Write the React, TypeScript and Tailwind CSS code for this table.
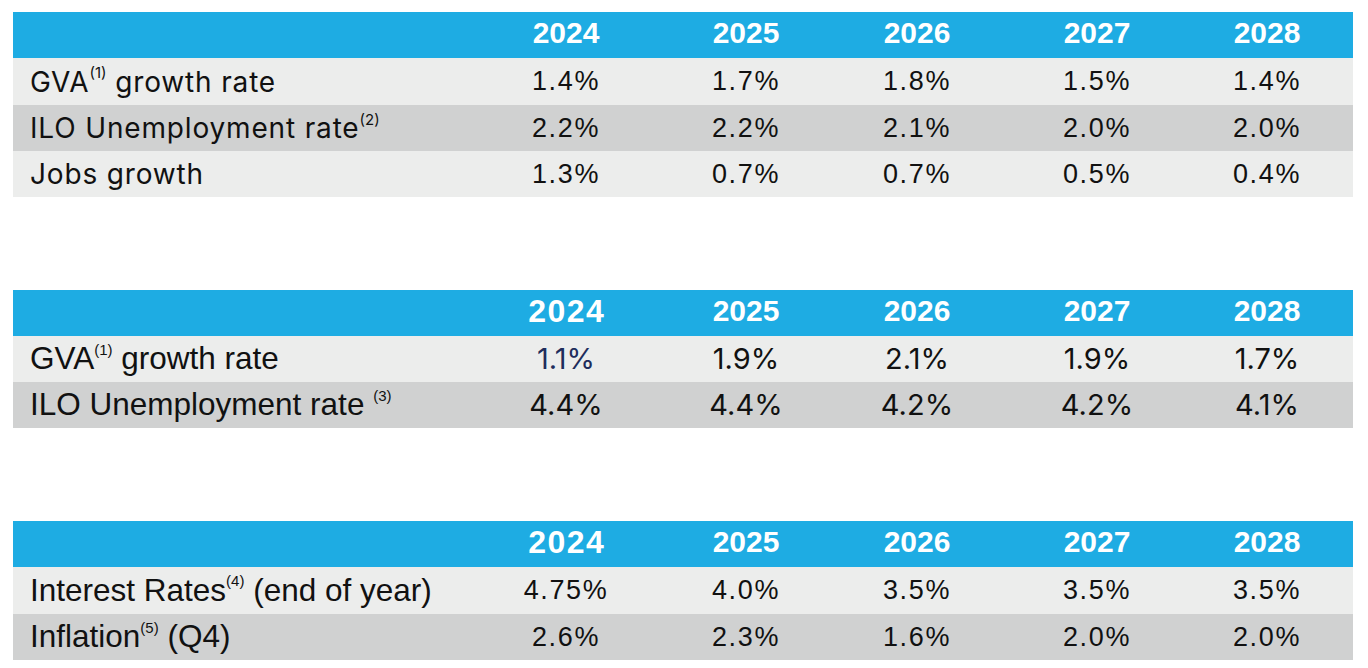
import React from "react";

type Row = { label: React.ReactNode; values: string[]; h: string; bg: string };

const years = ["2024", "2025", "2026", "2027", "2028"];

const Sup = ({ children }: { children: React.ReactNode }) => (
  <sup className="text-[15px] relative top-[-3px] align-super tracking-normal">{children}</sup>
);

const cols = "grid grid-cols-[448px_210px_150px_192px_168px_172px]";

function Table({
  rows,
  labelClass,
  valueClass,
  headerFirstClass,
}: {
  rows: Row[];
  labelClass: string;
  valueClass: (r: number, c: number) => string;
  headerFirstClass?: string;
}) {
  return (
    <div className="mx-[13px] w-[1340px]">
      <div className={`${cols} h-[46px] items-center pb-[5px] bg-[#1eace3] text-white`}>
        <div />
        {years.map((y, i) => (
          <div
            key={y}
            className={
              i === 0 && headerFirstClass
                ? headerFirstClass
                : "text-center font-bold text-[30px] leading-none [font-family:'Liberation_Sans',Arial,sans-serif]"
            }
          >
            {y}
          </div>
        ))}
      </div>
      {rows.map((r, ri) => (
        <div key={ri} className={`${cols} items-center ${r.h} ${r.bg} text-[#111]`}>
          <div className={`pl-[17px] whitespace-nowrap ${labelClass}`}>{r.label}</div>
          {r.values.map((v, ci) => (
            <div key={ci} className={`text-center whitespace-nowrap ${valueClass(ri, ci)}`}>
              {v}
            </div>
          ))}
        </div>
      ))}
    </div>
  );
}

const arialVal =
  "text-[27px] leading-none tracking-[0.06em] [font-family:'Liberation_Sans',Arial,sans-serif]";
const aptosVal = "text-[29px] leading-none pb-[2px] [font-family:Inter,sans-serif]";
const narrowLabel =
  "text-[31.5px] leading-none [font-family:'Liberation_Sans_Narrow','Arial_Narrow',sans-serif]";
const narrowHeader =
  "text-center font-bold text-[32px] leading-none tracking-[1.5px] pl-[1.5px] [font-family:'Liberation_Sans_Narrow','Arial_Narrow',sans-serif]";

export default function App() {
  const light = "bg-[#ecedec]";
  const dark = "bg-[#d0d1d1]";
  return (
    <div className="w-[1368px] h-[668px] bg-white pt-[12px] overflow-hidden">
      <Table
        labelClass="text-[28px] leading-none tracking-[0.03em] [font-family:Inter,sans-serif]"
        valueClass={() => arialVal}
        rows={[
          {
            label: (
              <>
                GVA<Sup>(1)</Sup> growth rate
              </>
            ),
            values: ["1.4%", "1.7%", "1.8%", "1.5%", "1.4%"],
            h: "h-[47px]",
            bg: light,
          },
          {
            label: (
              <>
                ILO Unemployment rate<Sup>(2)</Sup>
              </>
            ),
            values: ["2.2%", "2.2%", "2.1%", "2.0%", "2.0%"],
            h: "h-[46px]",
            bg: dark,
          },
          {
            label: <>Jobs growth</>,
            values: ["1.3%", "0.7%", "0.7%", "0.5%", "0.4%"],
            h: "h-[46px]",
            bg: light,
          },
        ]}
      />
      <div className="h-[93px]" />
      <Table
        labelClass={narrowLabel}
        valueClass={(r, c) => (r === 0 && c === 0 ? `${aptosVal} text-[#1f2d5c]` : aptosVal)}
        headerFirstClass={narrowHeader}
        rows={[
          {
            label: (
              <>
                GVA<Sup>(1)</Sup> growth rate
              </>
            ),
            values: ["1.1%", "1.9%", "2.1%", "1.9%", "1.7%"],
            h: "h-[46px]",
            bg: light,
          },
          {
            label: (
              <>
                ILO Unemployment rate <Sup>(3)</Sup>
              </>
            ),
            values: ["4.4%", "4.4%", "4.2%", "4.2%", "4.1%"],
            h: "h-[46px]",
            bg: dark,
          },
        ]}
      />
      <div className="h-[93px]" />
      <Table
        labelClass={narrowLabel}
        valueClass={() => arialVal}
        headerFirstClass={narrowHeader}
        rows={[
          {
            label: (
              <>
                Interest Rates<Sup>(4)</Sup> (end of year)
              </>
            ),
            values: ["4.75%", "4.0%", "3.5%", "3.5%", "3.5%"],
            h: "h-[47px]",
            bg: light,
          },
          {
            label: (
              <>
                Inflation<Sup>(5)</Sup> (Q4)
              </>
            ),
            values: ["2.6%", "2.3%", "1.6%", "2.0%", "2.0%"],
            h: "h-[46px]",
            bg: dark,
          },
        ]}
      />
    </div>
  );
}
